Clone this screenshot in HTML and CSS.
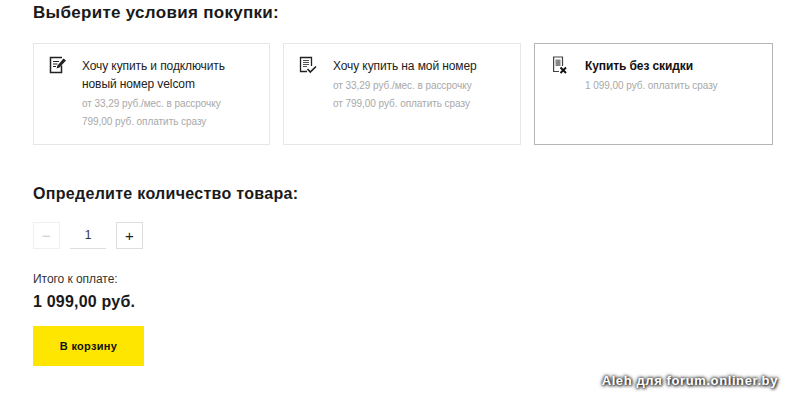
FILE: index.html
```html
<!DOCTYPE html>
<html lang="ru">
<head>
<meta charset="utf-8">
<title>Условия покупки</title>
<link rel="stylesheet" href="styles.css">
</head>
<body>
<main class="page">
  <h2 class="heading">Выберите условия покупки:</h2>
  <div class="cards">
    <div class="card">
      <svg class="icon" width="18" height="18" viewBox="0 0 18 18" fill="none" stroke="#222">
        <path d="M12.5 9.5V16.5H1.5V1.5H13" stroke-width="1.5"/>
        <path d="M4 5.5H10M4 8H8.5M4 10.5H7" stroke-width="1.2"/>
        <path d="M7.5 12.5L8.5 9.5L14.5 2.5L17 4.5L10.5 11.5Z" fill="#222" stroke="none"/>
      </svg>
      <div class="card-body">
        <div class="card-title">Хочу купить и подключить новый номер velcom</div>
        <div class="card-note">от 33,29 руб./мес. в рассрочку</div>
        <div class="card-note">799,00 руб. оплатить сразу</div>
      </div>
    </div>
    <div class="card card-second">
      <svg class="icon" width="18" height="18" viewBox="0 0 18 18" fill="none" stroke="#222">
        <path d="M8 15.5H1.5V1.5H12.5V10" stroke-width="1.3"/>
        <path d="M4 4.5H10M4 6.5H10M4 8.5H10M4 10.5H8" stroke="#555" stroke-width="1.2"/>
        <path d="M8.5 13L11.3 16L17 10.5" stroke-width="1.7"/>
      </svg>
      <div class="card-body">
        <div class="card-title">Хочу купить на мой номер</div>
        <div class="card-note">от 33,29 руб./мес. в рассрочку</div>
        <div class="card-note">от 799,00 руб. оплатить сразу</div>
      </div>
    </div>
    <div class="card card-active">
      <svg class="icon" width="15" height="18" viewBox="0 0 15 18" fill="none" stroke="#444">
        <path d="M6 15.5H0.6V1H9.5V10" stroke-width="1.2"/>
        <rect x="2.5" y="3.5" width="5" height="6.5" fill="#888" stroke="none"/>
        <path d="M7.5 11.5L13 17M13 11.5L7.5 17" stroke="#111" stroke-width="1.9"/>
      </svg>
      <div class="card-body">
        <div class="card-title card-title-bold">Купить без скидки</div>
        <div class="card-note">1 099,00 руб. оплатить сразу</div>
      </div>
    </div>
  </div>

  <h2 class="heading heading-qty">Определите количество товара:</h2>
  <div class="qty">
    <span class="qty-btn qty-btn-off">−</span>
    <span class="qty-value">1</span>
    <span class="qty-btn">+</span>
  </div>

  <div class="total-label">Итого к оплате:</div>
  <div class="total">1 099,00 руб.</div>
  <button class="buy" type="button">В корзину</button>
</main>
<div class="watermark">Aleh для forum.onliner.by</div>
</body>
</html>
```
FILE: styles.css
```css
* { box-sizing: border-box; }
html, body { margin: 0; background: #fff; }
body {
  width: 800px;
  height: 404px;
  overflow: hidden;
  position: relative;
  font-family: "Liberation Sans", Arial, sans-serif;
  color: #111;
}
.page { padding: 3px 27px 0 33px; }
.heading {
  margin: 0;
  font-size: 17px;
  line-height: 20px;
  font-weight: 700;
  letter-spacing: 0.3px;
  color: #1a1a1a;
}
.cards {
  display: grid;
  grid-template-columns: 237px 238px 239px;
  column-gap: 13px;
  margin-top: 20px;
}
.card {
  height: 102px;
  display: flex;
  gap: 16px;
  padding: 12px 10px 0 15px;
  border: 1px solid #e6e6e6;
}
.card-second { gap: 17px; }
.card-active {
  border-color: #b5b5b5;
  gap: 18px;
  padding-left: 18px;
}
.icon { flex: none; }
.card-body { padding-top: 1px; margin-left: -1px; }
.card-title {
  font-size: 12px;
  line-height: 18px;
  letter-spacing: -0.1px;
  color: #222;
  margin-bottom: 2px;
}
.card-title-bold { font-weight: 700; color: #111; }
.card-note {
  font-size: 10px;
  line-height: 18px;
  letter-spacing: -0.05px;
  color: #a8a8a8;
}
.heading-qty {
  margin-top: 39px;
  font-size: 16px;
}
.qty {
  display: flex;
  align-items: stretch;
  height: 27px;
  margin-top: 18px;
}
.qty-btn {
  width: 27px;
  border: 1px solid #ddd;
  display: flex;
  align-items: center;
  justify-content: center;
  font-size: 15px;
  color: #222;
}
.qty-btn-off { border-color: #f0f0f0; color: #ccc; }
.qty-value {
  width: 36px;
  margin: 0 10px 0 10px;
  border-bottom: 1px solid #ddd;
  display: flex;
  align-items: center;
  justify-content: center;
  font-size: 12px;
  color: #333;
}
.total-label {
  margin-top: 22px;
  font-size: 12px;
  line-height: 16px;
  letter-spacing: -0.05px;
  color: #333;
}
.total {
  margin-top: 5px;
  font-size: 16px;
  line-height: 20px;
  font-weight: 700;
  letter-spacing: 0.2px;
  color: #1a1a1a;
}
.buy {
  display: block;
  width: 111px;
  height: 40px;
  margin-top: 14px;
  border: 0;
  padding: 0;
  background: #ffe600;
  font: 700 11px "Liberation Sans", Arial, sans-serif;
  letter-spacing: 0.3px;
  color: #111;
}
.watermark {
  position: absolute;
  right: 22px;
  top: 373px;
  font-size: 13px;
  line-height: 16px;
  font-weight: 700;
  letter-spacing: 0.6px;
  color: #fff;
  text-shadow: 0 0 3px #222, 0 0 4px #222, 1px 1px 3px #444;
}
```
